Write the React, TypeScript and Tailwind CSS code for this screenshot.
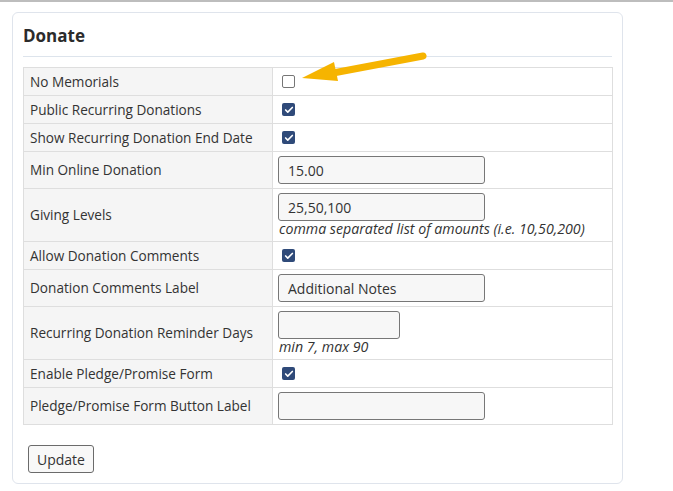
import { Check } from "lucide-react";

type Row = {
  label: string;
  kind: "check" | "text";
  checked?: boolean;
  value?: string;
  help?: string;
  narrow?: boolean;
};

const rows: Row[] = [
  { label: "No Memorials", kind: "check", checked: false },
  { label: "Public Recurring Donations", kind: "check", checked: true },
  { label: "Show Recurring Donation End Date", kind: "check", checked: true },
  { label: "Min Online Donation", kind: "text", value: "15.00" },
  { label: "Giving Levels", kind: "text", value: "25,50,100", help: "comma separated list of amounts (i.e. 10,50,200)" },
  { label: "Allow Donation Comments", kind: "check", checked: true },
  { label: "Donation Comments Label", kind: "text", value: "Additional Notes" },
  { label: "Recurring Donation Reminder Days", kind: "text", value: "", help: "min 7, max 90", narrow: true },
  { label: "Enable Pledge/Promise Form", kind: "check", checked: true },
  { label: "Pledge/Promise Form Button Label", kind: "text", value: "" },
];

const CheckBox = ({ checked }: { checked?: boolean }) =>
  checked ? (
    <span className="ml-[4px] flex h-[13px] w-[13px] items-center justify-center rounded-[2px] bg-[#2f4a79]">
      <Check size={10} strokeWidth={4} className="text-white" />
    </span>
  ) : (
    <span className="ml-[4px] block h-[13px] w-[13px] rounded-[2px] border border-[#767676] bg-white" />
  );

export default function App() {
  return (
    <div className="min-h-[491px] w-[673px] border-t-2 border-[#bdbdbd] bg-white pt-[10px] pl-[12px] text-[14px] text-[#333] [font-family:'Open_Sans',sans-serif]">
      <div className="relative w-[611px] rounded-[6px] border border-[#dfe4ec] px-[10px] pt-[11px] pb-[10px]">
        <h2 className="h-[32px] text-[17px] font-bold leading-[24px] text-[#2b2b2b]">Donate</h2>
        <div className="border-t border-[#dde4ec]" />
        <table className="mt-[10px] w-[590px] border-collapse">
          <tbody>
            {rows.map((r) => (
              <tr key={r.label}>
                <td className="w-[249px] border border-[#dedede] bg-[#f5f5f5] px-[6px] align-middle text-[13.6px] leading-[18px]">
                  {r.label}
                </td>
                <td className="border border-[#dedede] px-[5px] align-middle">
                  {r.kind === "check" ? (
                    <div className="flex h-[27px] items-center">
                      <CheckBox checked={r.checked} />
                    </div>
                  ) : (
                    <div className="py-[4px]">
                      <div
                        className={`flex h-[28px] items-center rounded-[3px] border border-[#777] bg-[#f7f7f7] px-[9px] text-[14px] ${
                          r.narrow ? "w-[122px]" : "w-[207px]"
                        }`}
                      >
                        {r.value}
                      </div>
                      {r.help && (
                        <div className="pl-[1px] text-[14.2px] italic leading-[16px]">{r.help}</div>
                      )}
                    </div>
                  )}
                </td>
              </tr>
            ))}
          </tbody>
        </table>
        <button className="mt-[20px] ml-[5px] h-[28px] rounded-[3px] border border-[#6b6b6b] bg-[#f8f8f8] px-[8px] text-[14px] text-[#333]">
          Update
        </button>
        <svg className="absolute left-[280px] top-[30px]" width="140" height="45" viewBox="0 0 140 45">
          <line x1="130" y1="13" x2="40" y2="30" stroke="#f6b400" strokeWidth="7" strokeLinecap="round" />
          <polygon points="9,35 41,19 45,38" fill="#f6b400" />
        </svg>
      </div>
    </div>
  );
}
